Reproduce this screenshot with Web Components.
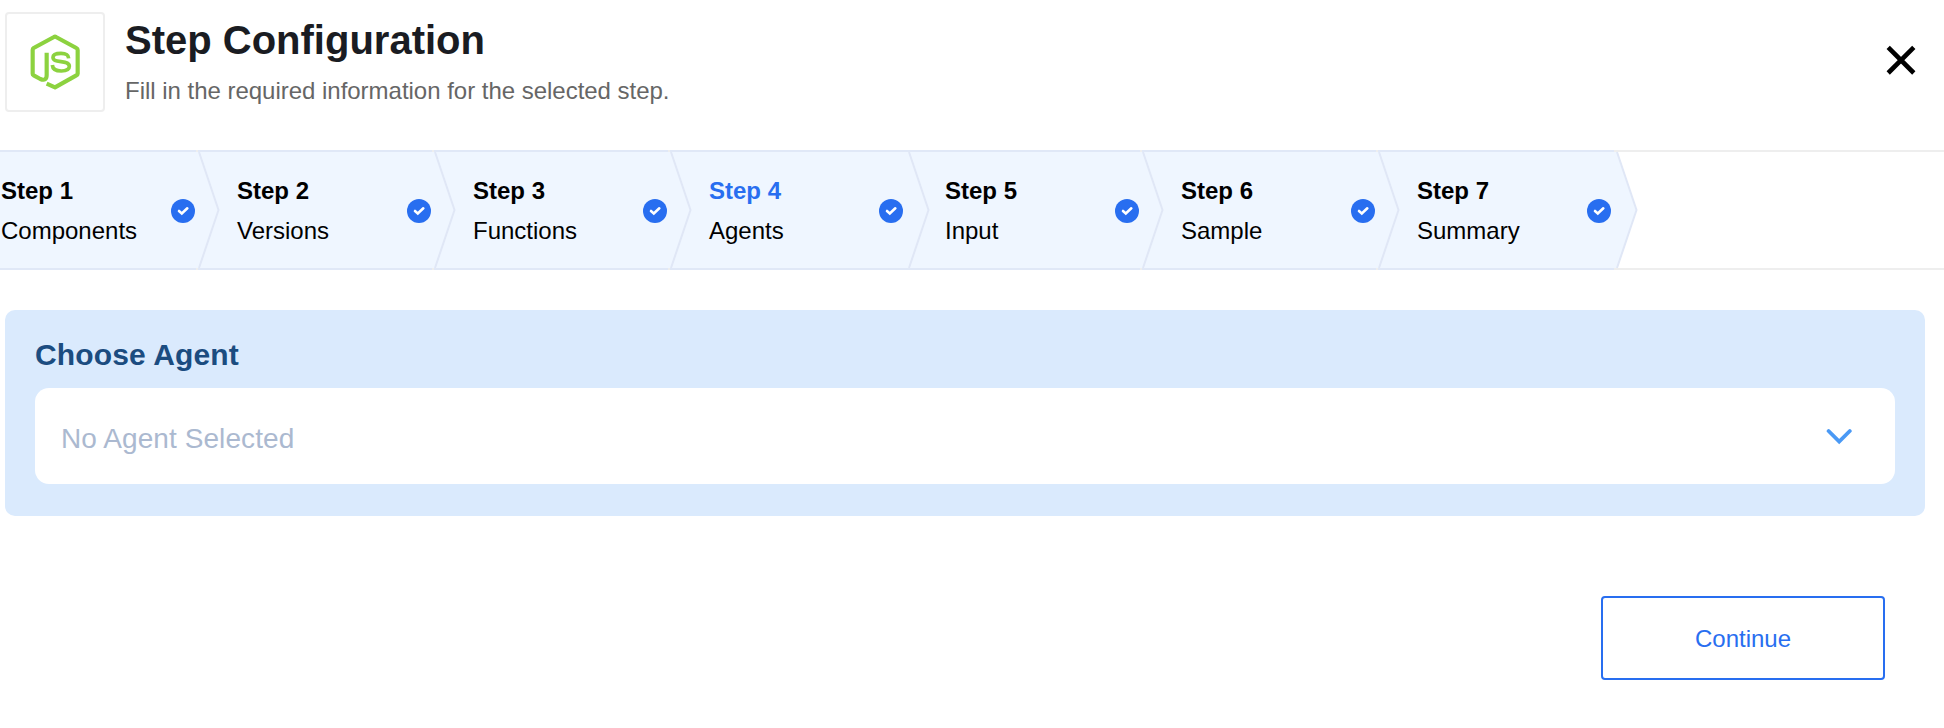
<!DOCTYPE html>
<html lang="en">
<head>
<meta charset="utf-8">
<title>Step Configuration</title>
<style>
body { margin: 0; background: #fff; font-family: "Liberation Sans", Arial, sans-serif; }
</style>
</head>
<body>
<step-config>
  <config-header heading="Step Configuration">Fill in the required information for the selected step.</config-header>
  <step-bar>
    <step-item label="Step 1">Components</step-item>
    <step-item label="Step 2">Versions</step-item>
    <step-item label="Step 3">Functions</step-item>
    <step-item label="Step 4" active class="wide">Agents</step-item>
    <step-item label="Step 5">Input</step-item>
    <step-item label="Step 6">Sample</step-item>
    <step-item label="Step 7" class="wide">Summary</step-item>
  </step-bar>
  <agent-panel heading="Choose Agent"><agent-select>No Agent Selected</agent-select></agent-panel>
  <outline-button>Continue</outline-button>
</step-config>
<script>
function define(name, render) {
  customElements.define(name, class extends HTMLElement {
    constructor() {
      super();
      this.attachShadow({ mode: 'open' });
    }
    connectedCallback() {
      this.shadowRoot.innerHTML = render(this);
    }
  });
}

define('step-config', () => `
<style>
:host { display: flex; flex-direction: column; width: 100%; height: 728px; overflow: hidden; }
::slotted(outline-button) { align-self: flex-end; margin: 80px 59px 0 0; }
</style><slot></slot>`);

define('node-logo', () => `
<style>
:host { display: block; box-sizing: border-box; width: 100px; height: 100px; border: 2px solid #eee; border-radius: 4px; flex: none; }
svg { display: block; width: 96px; height: 96px; }
</style>
<svg viewBox="21 27 288 288" fill="none" stroke="#8cd23f" stroke-width="12.5" stroke-linejoin="round">
<path d="M140 143V210Q140 230 121 222L101 211Q98 209 98 206V135Q98 131 101 129L162 96Q165 94 168 96L229 129Q233 131 233 135V206Q233 209 229 211L165 247L140 236"/>
<path d="M206 160C205 148 198 145 183 145C168 145 159 148 159 157C159 166 166 168 183 170C201 172 208 175 208 184C208 194 200 198 184 198C166 198 158 193 157 180" stroke-width="11"/>
</svg>`);

define('config-header', el => `
<style>
:host { display: flex; align-items: flex-start; padding: 12px 28px 0 5px; height: 138px; box-sizing: content-box; }
.text { flex: 1; padding-left: 20px; }
h1 { margin: 5px 0 0; font-size: 40px; line-height: 46px; color: #1a1c22; }
p { margin: 14px 0 0; font-size: 24px; line-height: 28px; letter-spacing: -0.02px; color: #666; }
svg { display: block; margin-top: 33px; }
</style>
<node-logo></node-logo>
<div class="text"><h1>${el.getAttribute('heading')}</h1><p><slot></slot></p></div>
<svg width="30" height="30" viewBox="0 0 30 30" stroke="#000" stroke-width="4.6"><path d="M2.2 2.4L27.8 28M27.8 2.4L2.2 28"/></svg>`);

define('step-bar', () => `
<style>
:host { display: flex; isolation: isolate; box-sizing: border-box; height: 120px; border-top: 2px solid #eee; border-bottom: 2px solid #eee; }
</style><slot></slot>`);

define('step-item', el => `
<style>
:host { display: block; position: relative; width: 236px; height: 116px; flex: none; }
.body { box-sizing: border-box; display: flex; align-items: center; height: 120px; margin: -2px 0; padding: 2px 41px 0 1px; }
.text { flex: 1; }
b, span { display: block; font-size: 24px; line-height: 40px; color: #000; }
:host([active]) b { color: #286ef0; }
.edge { position: absolute; left: -38px; top: -2px; z-index: ${-1 - [...el.parentNode.children].indexOf(el)}; }
</style>
<svg class="edge" width="260" height="120" viewBox="0 0 260 120" fill="none">
<path d="M0 0H${right(el) - 3}V2H${right(el)}L${right(el) + 19.5} 60L${right(el)} 118H${right(el) - 3}V120H0Z" fill="#eff6ff"/>
<path d="M0 1H${right(el) - 3}M0 119H${right(el) - 3}" stroke="#e0e8f7" stroke-width="2"/>
<path d="M${right(el)} 2L${right(el) + 19.5} 60L${right(el)} 118" stroke="#e0e7f6" stroke-width="2"/>
</svg>
<div class="body"><div class="text"><b>${el.getAttribute('label')}</b><span><slot></slot></span></div>
<svg width="24" height="24" viewBox="0 0 24 24" fill="none"><circle cx="12" cy="12" r="12" fill="#286ef0"/><path d="M8 12L10.8 14.4L16.3 9.3" stroke="#fff" stroke-width="2.6" stroke-linecap="round"/></svg></div>`);

function right(el) {
  return el.classList.contains('wide') ? 239 : 237;
}

define('agent-panel', el => `
<style>
:host { display: block; box-sizing: border-box; height: 206px; margin: 40px 19px 0 5px; padding: 28px 30px 32px; background: #daeafd; border-radius: 10px; }
h2 { margin: 0 0 16px; font-size: 30px; line-height: 34px; letter-spacing: 0.14px; color: #1b4c80; }
</style><h2>${el.getAttribute('heading')}</h2><slot></slot>`);

define('agent-select', () => `
<style>
:host { display: flex; align-items: center; justify-content: space-between; box-sizing: border-box; height: 96px; padding: 0 43px 0 26px; background: #fff; border-radius: 14px; font-size: 28px; line-height: 32px; letter-spacing: 0.08px; color: #abb9d0; }
span { padding-top: 6px; }
</style><span><slot></slot></span>
<svg width="26" height="18" viewBox="0 0 26 18" fill="none" stroke="#4a99f5" stroke-width="3.8" stroke-linecap="round"><path d="M2.6 4L13.2 14.6L23.8 4" stroke-linejoin="miter"/></svg>`);

define('outline-button', () => `
<style>
:host { display: block; }
button { display: block; box-sizing: border-box; width: 284px; height: 84px; padding: 2px 0 0; border: 2px solid #286ef0; border-radius: 4px; background: #fff; color: #286ef0; font: 24px "Liberation Sans", Arial, sans-serif; }
</style><button><slot></slot></button>`);
</script>
</body>
</html>
